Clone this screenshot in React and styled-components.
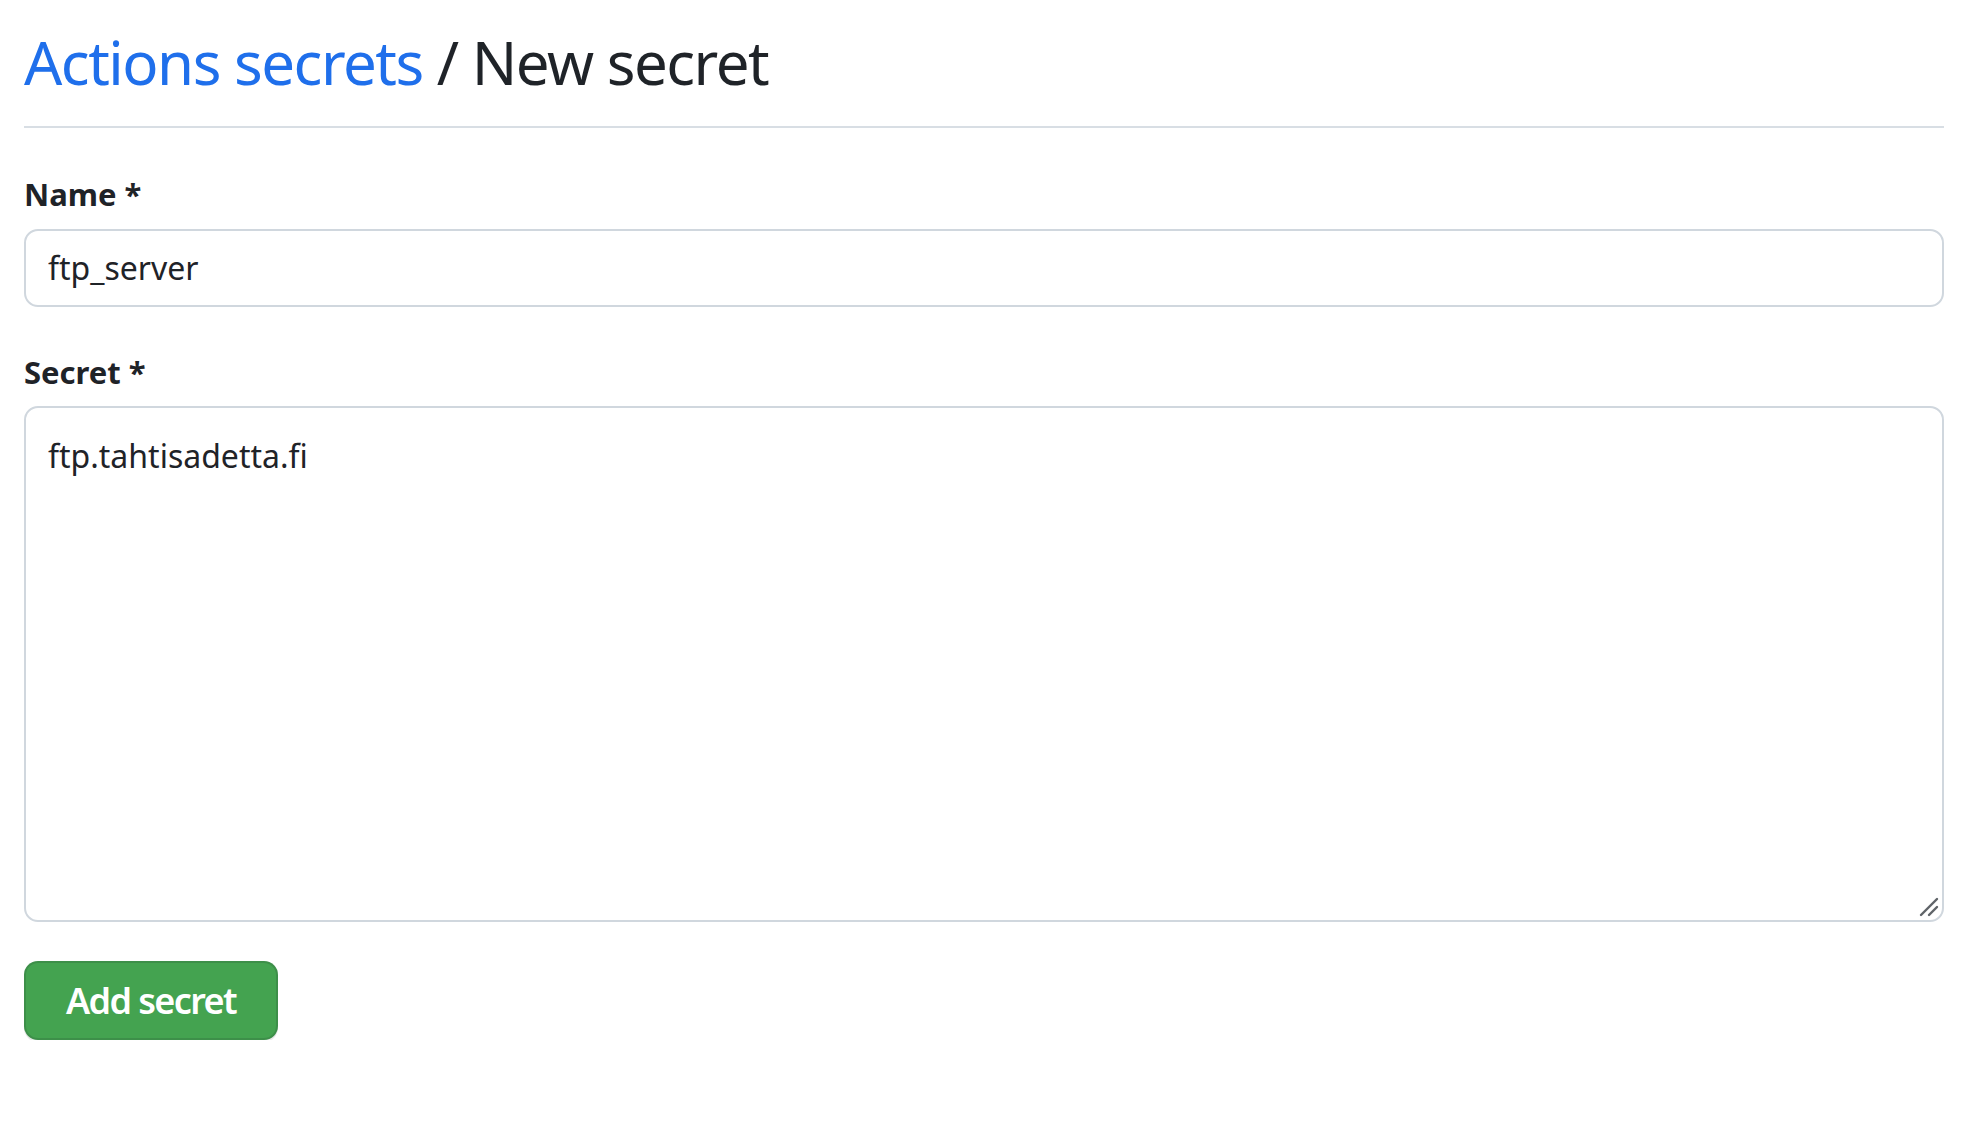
import React from "react";
import styled, { createGlobalStyle } from "styled-components";

const GlobalStyle = createGlobalStyle`
  html, body { margin: 0; padding: 0; background: #ffffff; }
  body {
    font-family: "Noto Sans", "Open Sans", sans-serif;
    color: #1f2328;
  }
  * { box-sizing: border-box; }
`;

const Page = styled.main`
  width: 1920px;
  margin-left: 24px;
  display: flex;
  flex-direction: column;
`;

const Subhead = styled.div`
  padding-top: 25px;
  padding-bottom: 26px;
  border-bottom: 2px solid #d8dee4;
`;

const Heading = styled.h2`
  margin: 0;
  font-size: 60px;
  line-height: 75px;
  font-weight: 400;
  letter-spacing: -1.5px;
  color: #1f2328;
`;

const Crumb = styled.a`
  color: #1f6feb;
  text-decoration: none;
`;

const Form = styled.form`
  display: flex;
  flex-direction: column;
`;

const Field = styled.div`
  display: flex;
  flex-direction: column;
  gap: 11px;
  margin-top: ${(p) => p.$top}px;
`;

const Label = styled.label`
  font-size: 31px;
  line-height: 46.5px;
  font-weight: 700;
  color: #1f2328;
`;

const Input = styled.input`
  height: 78px;
  width: 100%;
  padding: 0 22px;
  border: 2px solid #d0d7de;
  border-radius: 14px;
  background: #ffffff;
  font-family: "Noto Sans", "Open Sans", sans-serif;
  font-size: 32px;
  color: #1f2328;
  outline: none;
`;

const AreaWrap = styled.div`
  position: relative;
  display: flex;
`;

const TextArea = styled.textarea`
  height: 516px;
  width: 100%;
  padding: 24px 22px;
  border: 2px solid #d0d7de;
  border-radius: 14px;
  background: #ffffff;
  font-family: "Noto Sans", "Open Sans", sans-serif;
  font-size: 32px;
  line-height: 48px;
  color: #1f2328;
  resize: none;
  outline: none;
`;

const ResizeGrip = styled.svg`
  position: absolute;
  right: 4px;
  bottom: 4px;
  width: 22px;
  height: 22px;
  pointer-events: none;
`;

const Actions = styled.div`
  margin-top: 39px;
  display: flex;
`;

const PrimaryButton = styled.button`
  height: 79px;
  padding: 0 40px;
  border: 2px solid rgba(27, 31, 36, 0.15);
  border-radius: 14px;
  background: #44a350;
  color: #ffffff;
  font-family: "Noto Sans", "Open Sans", sans-serif;
  font-size: 36px;
  font-weight: 600;
  letter-spacing: -1.6px;
  box-shadow: 0 2px 0 rgba(27, 31, 36, 0.1);
  cursor: pointer;
`;

export default function App() {
  return (
    <>
      <GlobalStyle />
      <Page>
        <Subhead>
          <Heading>
            <Crumb href="#">Actions secrets</Crumb> / New secret
          </Heading>
        </Subhead>
        <Form onSubmit={(e) => e.preventDefault()}>
          <Field $top={43}>
            <Label htmlFor="secret_name">Name *</Label>
            <Input id="secret_name" type="text" defaultValue="ftp_server" />
          </Field>
          <Field $top={42}>
            <Label htmlFor="secret_value">Secret *</Label>
            <AreaWrap>
              <TextArea id="secret_value" defaultValue="ftp.tahtisadetta.fi" />
              <ResizeGrip viewBox="0 0 22 22" aria-hidden="true">
                <line x1="3" y1="19" x2="19" y2="3" stroke="#5f6368" strokeWidth="2.4" strokeLinecap="round" />
                <line x1="11" y1="19" x2="19" y2="11" stroke="#5f6368" strokeWidth="2.4" strokeLinecap="round" />
              </ResizeGrip>
            </AreaWrap>
          </Field>
          <Actions>
            <PrimaryButton type="submit">Add secret</PrimaryButton>
          </Actions>
        </Form>
      </Page>
    </>
  );
}
